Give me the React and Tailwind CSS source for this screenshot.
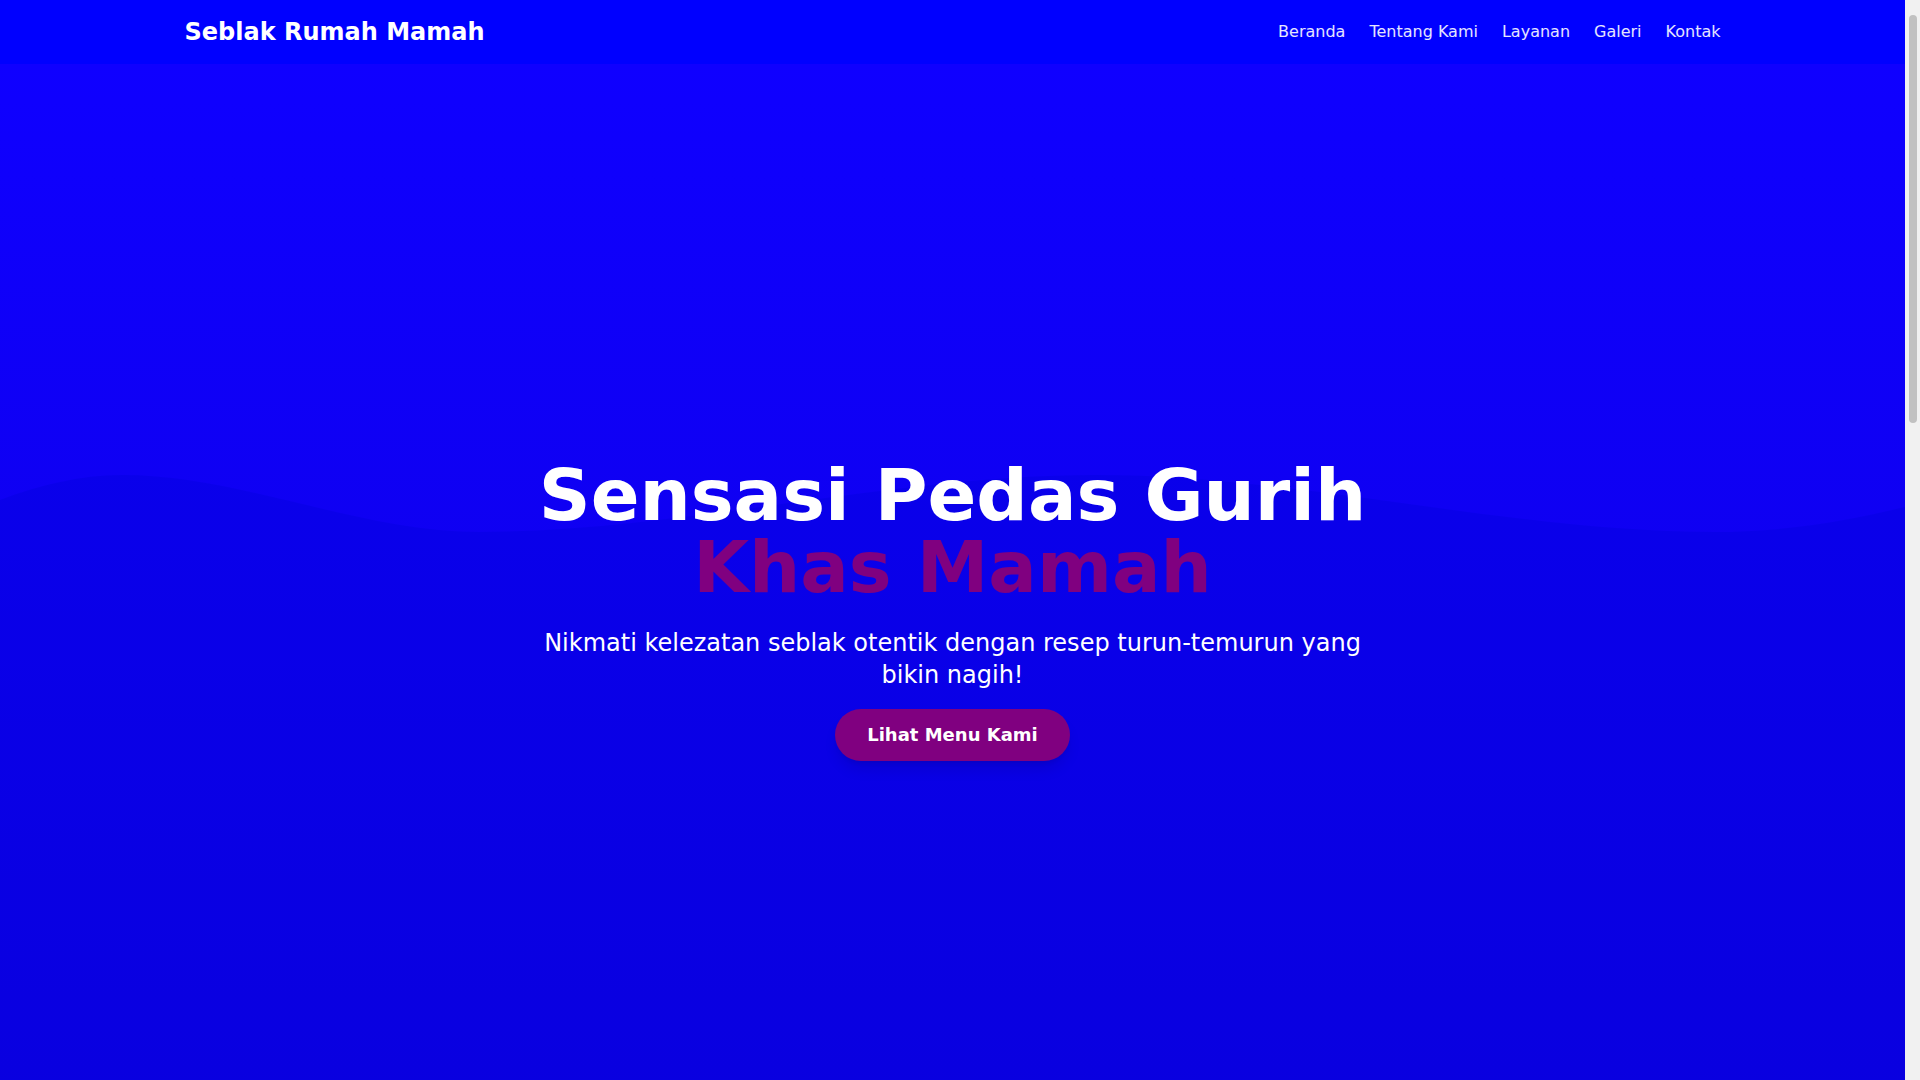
import React from 'react'

const links = ['Beranda', 'Tentang Kami', 'Layanan', 'Galeri', 'Kontak']

function Navbar() {
  return (
    <nav className="bg-[#0000ff] py-4 text-white">
      <div className="container mx-auto flex items-center justify-between">
        <a href="#beranda" className="text-2xl font-bold">
          Seblak Rumah Mamah
        </a>
        <ul className="flex items-center gap-6">
          {links.map((l) => (
            <li key={l}>
              <a href={'#' + l.toLowerCase().replace(' ', '-')} className="text-white/90 hover:text-white">
                {l}
              </a>
            </li>
          ))}
        </ul>
      </div>
    </nav>
  )
}

function Hero() {
  return (
    <section
      id="beranda"
      className="relative flex min-h-screen items-center justify-center overflow-hidden bg-linear-to-b from-[#0f00ff] to-[#0e00e2] pt-3 text-white"
    >
      {/* wave */}
      <svg
        className="absolute left-0 top-[406px] h-[674px] w-full"
        viewBox="0 0 1905 674"
        preserveAspectRatio="none"
      >
        <path
          d="M0,30 C40,15 80,5 122,5 C240,5 360,62 478,62 C680,62 890,5 1096,5 C1300,5 1510,62 1714,62 C1790,62 1850,50 1905,37 L1905,674 L0,674 Z"
          fill="#0000d8"
          fillOpacity="0.3"
        />
      </svg>

      <div className="relative z-10 mx-auto max-w-4xl px-4 text-center">
        <h1 className="mb-6 text-7xl font-bold">
          Sensasi Pedas Gurih
          <span className="block text-[#800080]">Khas Mamah</span>
        </h1>
        <p className="mb-[18px] text-2xl">
          Nikmati kelezatan seblak otentik dengan resep turun-temurun yang bikin nagih!
        </p>
        <a
          href="#layanan"
          className="inline-block rounded-full bg-[#800080] px-8 py-3 text-lg font-bold text-white shadow-lg"
        >
          Lihat Menu Kami
        </a>
      </div>
    </section>
  )
}

function Section({ id, title, children }) {
  return (
    <section id={id} className="h-[380px] bg-white py-16">
      <div className="container mx-auto">
        <h2 className="mb-8 text-center text-4xl font-bold text-[#800080]">{title}</h2>
        {children}
      </div>
    </section>
  )
}

export default function App() {
  return (
    <div className="flex h-screen bg-[#f1f1f1] font-['DejaVu_Sans',sans-serif]">
      <main className="min-w-0 flex-1 overflow-y-auto">
        <Navbar />
        <Hero />
        <Section id="tentang-kami" title="Tentang Kami">
          <p className="mx-auto max-w-3xl text-center text-lg text-gray-700">
            Seblak Rumah Mamah hadir dengan resep keluarga yang diwariskan turun-temurun.
          </p>
        </Section>
        <Section id="layanan" title="Layanan">
          <div className="grid grid-cols-3 gap-8">
            {['Seblak Original', 'Seblak Seafood', 'Seblak Ceker'].map((m) => (
              <div key={m} className="rounded-xl bg-gray-100 p-6 text-center font-semibold">
                {m}
              </div>
            ))}
          </div>
        </Section>
        <Section id="galeri" title="Galeri">
          <div className="grid grid-cols-4 gap-4">
            {[1, 2, 3, 4].map((i) => (
              <div key={i} className="h-32 rounded-lg bg-gray-200" />
            ))}
          </div>
        </Section>
        <Section id="kontak" title="Kontak">
          <p className="text-center text-lg text-gray-700">Hubungi kami untuk pemesanan.</p>
        </Section>
        <footer className="bg-[#0000ff] py-8 text-center text-white">
          © Seblak Rumah Mamah
        </footer>
      </main>
      {/* scroll track */}
      <div className="flex w-[15px] shrink-0 flex-col items-center py-[15px]">
        <div className="h-[408px] w-[8px] rounded-sm bg-[#c1c1c1]" />
      </div>
    </div>
  )
}
